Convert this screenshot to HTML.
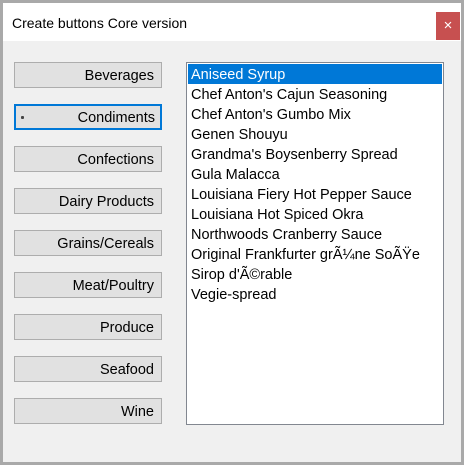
<!DOCTYPE html>
<html><head><style>
body{margin:0;width:464px;height:465px;background:#a9a9a9;position:relative;overflow:hidden;font-family:"Liberation Sans",sans-serif;}
#win{position:absolute;left:3px;top:3px;width:458px;height:459px;background:#f0f0f0;}
#title{position:absolute;left:0;top:0;width:458px;height:38px;background:#fff;}
#title span{position:absolute;left:9px;top:12px;font-size:14px;color:#000;}
#close{position:absolute;left:433px;top:9px;width:24px;height:28px;background:#c75050;color:#fff;font-size:15px;text-align:center;line-height:28px;}
.b{position:absolute;left:11px;width:146px;height:24px;border:1px solid #adadad;background:#e1e1e1;font-size:14.5px;text-align:right;line-height:26px;box-sizing:content-box;}
.b span{padding-right:7px;}
.f{border:2px solid #0078d7;width:144px;height:22px;line-height:24px;}
.f span{padding-right:5px;}
.dot{position:absolute;left:5px;top:10px;width:3px;height:3px;background:#444;border-radius:1px;}
#list{position:absolute;left:183px;top:59px;width:256px;height:361px;border:1px solid #828790;background:#fff;}
#list div{height:20px;line-height:22px;font-size:14.5px;padding-left:3px;margin:0 1px;white-space:nowrap;}
#list .sel{background:#0078d7;color:#fff;margin-top:1px;}
</style></head><body>
<div id="win">
<div id="title"><span>Create buttons Core version</span><div id="close">×</div></div>
<div class="b" style="top:59px"><span>Beverages</span></div>
<div class="b f" style="top:101px"><div class="dot"></div><span>Condiments</span></div>
<div class="b" style="top:143px"><span>Confections</span></div>
<div class="b" style="top:185px"><span>Dairy Products</span></div>
<div class="b" style="top:227px"><span>Grains/Cereals</span></div>
<div class="b" style="top:269px"><span>Meat/Poultry</span></div>
<div class="b" style="top:311px"><span>Produce</span></div>
<div class="b" style="top:353px"><span>Seafood</span></div>
<div class="b" style="top:395px"><span>Wine</span></div>
<div id="list">
<div class="sel">Aniseed Syrup</div>
<div>Chef Anton's Cajun Seasoning</div>
<div>Chef Anton's Gumbo Mix</div>
<div>Genen Shouyu</div>
<div>Grandma's Boysenberry Spread</div>
<div>Gula Malacca</div>
<div>Louisiana Fiery Hot Pepper Sauce</div>
<div>Louisiana Hot Spiced Okra</div>
<div>Northwoods Cranberry Sauce</div>
<div>Original Frankfurter grÃ¼ne SoÃŸe</div>
<div>Sirop d'Ã©rable</div>
<div>Vegie-spread</div>
</div>
</div>
</body></html>
